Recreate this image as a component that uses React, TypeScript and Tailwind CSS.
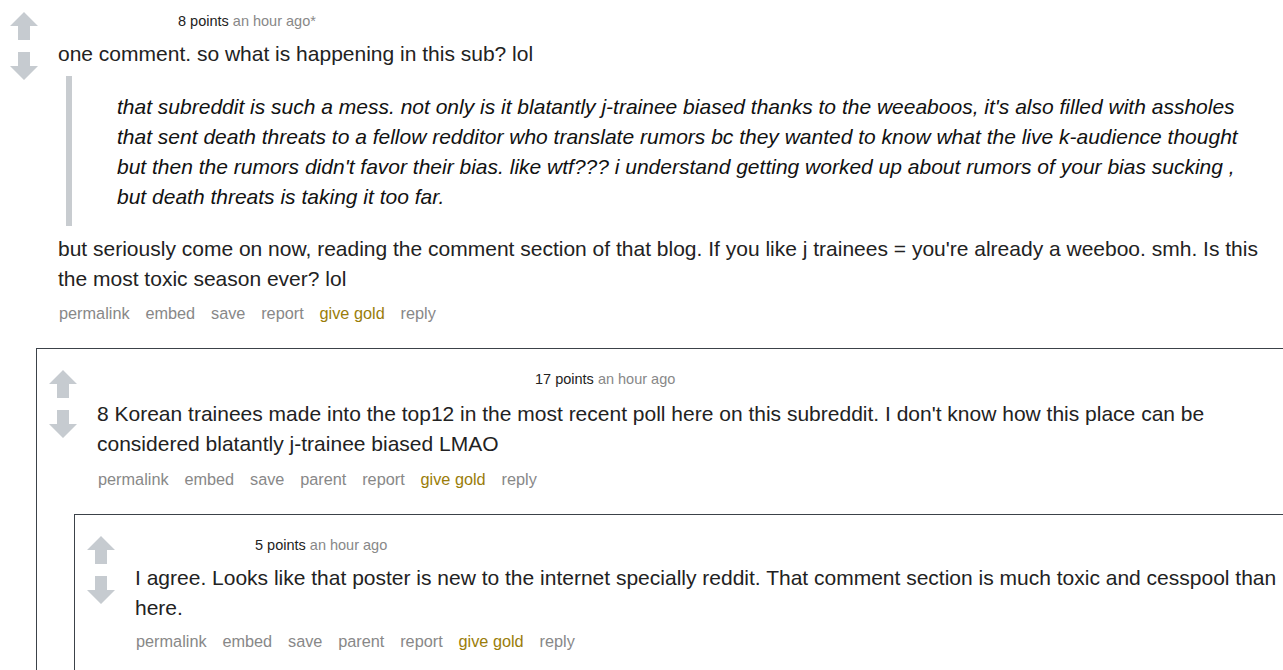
import React from "react";

const Up = () => (
  <svg width="28" height="28" viewBox="0 0 28 28" className="block">
    <polygon points="14,0 28,14 20,14 20,28 8,28 8,14 0,14" fill="#c6cbd0" />
  </svg>
);
const Down = () => (
  <svg width="28" height="28" viewBox="0 0 28 28" className="block">
    <polygon points="8,0 20,0 20,14 28,14 14,28 0,14 8,14" fill="#c6cbd0" />
  </svg>
);

const Arrows = ({ top }: { top: string }) => (
  <div className={`ml-[10px] w-[28px] shrink-0 flex flex-col gap-[12px] ${top}`}>
    <Up />
    <Down />
  </div>
);

const Links = ({ parent, cls }: { parent?: boolean; cls: string }) => (
  <div className={`flex gap-[15.8px] pl-[1px] text-[16.3px] leading-[20px] text-[#888] whitespace-nowrap ${cls}`}>
    <span>permalink</span>
    <span>embed</span>
    <span>save</span>
    {parent && <span>parent</span>}
    <span>report</span>
    <span className="text-[#9a7d0a]">give gold</span>
    <span>reply</span>
  </div>
);

const Tagline = ({ pts, time, ml }: { pts: string; time: string; ml: string }) => (
  <div className={`text-[14.5px] leading-[20px] whitespace-nowrap ${ml}`}>
    <span className="text-[#222]">{pts}</span> <span className="text-[#888]">{time}</span>
  </div>
);

export default function App() {
  return (
    <div
      className="w-[1283px] h-[670px] overflow-hidden bg-white text-[#222]"
      style={{ fontFamily: '"Liberation Sans", Arial, sans-serif' }}
    >
      {/* Comment 1 */}
      <div className="flex pt-[11px] w-[1400px]">
        <Arrows top="mt-[1px]" />
        <div className="ml-[20px] flex-1">
          <Tagline pts="8 points" time="an hour ago*" ml="ml-[120px]" />
          <p className="mt-[8px] text-[21px] leading-[30px] whitespace-nowrap">
            one comment. so what is happening in this sub? lol
          </p>
          <div className="mt-[7px] ml-[8px] border-l-[6px] border-[#c8ccd0] pl-[45px] pt-[16px] pb-[14px] italic text-[21px] leading-[30px] text-[#111] whitespace-nowrap">
            that subreddit is such a mess. not only is it blatantly j-trainee biased thanks to the weeaboos, it's also filled with assholes
            <br />
            that sent death threats to a fellow redditor who translate rumors bc they wanted to know what the live k-audience thought
            <br />
            but then the rumors didn't favor their bias. like wtf??? i understand getting worked up about rumors of your bias sucking ,
            <br />
            but death threats is taking it too far.
          </div>
          <p className="mt-[8px] text-[21px] leading-[30px] whitespace-nowrap">
            but seriously come on now, reading the comment section of that blog. If you like j trainees = you're already a weeboo. smh. Is this
            <br />
            the most toxic season ever? lol
          </p>
          <Links cls="mt-[9px]" />
        </div>
      </div>

      {/* Comment 2 box */}
      <div className="mt-[25px] ml-[36px] w-[1400px] border-l border-t border-[#3c4249] pl-[2px] pt-[20px]">
        <div className="flex">
          <Arrows top="mt-[1px]" />
          <div className="ml-[20px] flex-1">
            <Tagline pts="17 points" time="an hour ago" ml="ml-[438px]" />
            <p className="mt-[10px] text-[21px] leading-[30px] whitespace-nowrap">
              8 Korean trainees made into the top12 in the most recent poll here on this subreddit. I don't know how this place can be
              <br />
              considered blatantly j-trainee biased LMAO
            </p>
            <Links parent cls="mt-[10px]" />
          </div>
        </div>

        {/* Comment 3 box */}
        <div className="mt-[25px] ml-[35px] border-l border-t border-[#3c4249] pl-[2px] pt-[20px] pb-[40px]">
          <div className="flex">
            <Arrows top="mt-[1px]" />
            <div className="ml-[20px] flex-1">
              <Tagline pts="5 points" time="an hour ago" ml="ml-[120px]" />
              <p className="mt-[8px] text-[21px] leading-[30px] whitespace-nowrap">
                I agree. Looks like that poster is new to the internet specially reddit. That comment section is much toxic and cesspool than
                <br />
                here.
              </p>
              <Links parent cls="mt-[8px]" />
            </div>
          </div>
        </div>
      </div>
    </div>
  );
}
